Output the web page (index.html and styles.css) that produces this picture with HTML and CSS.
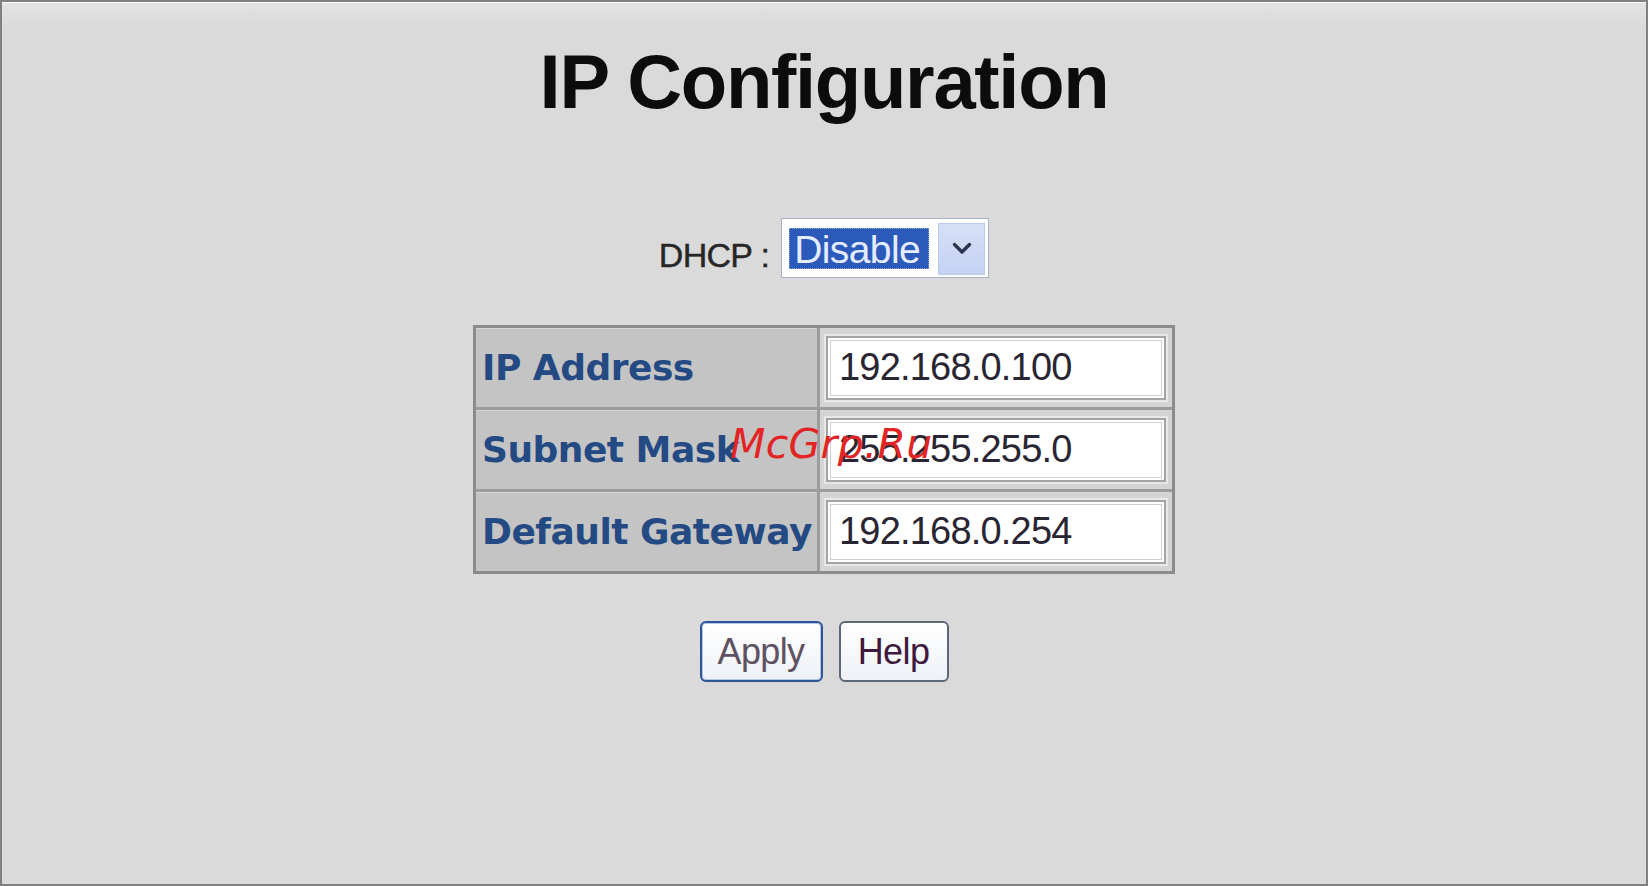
FILE: index.html
```html
<!DOCTYPE html>
<html lang="en">
<head>
<meta charset="utf-8">
<title>IP Configuration</title>
<link rel="stylesheet" href="styles.css">
</head>
<body>
<div class="frame">
  <h1 class="title">IP Configuration</h1>
  <div class="dhcp-row">
    <span class="dhcp-label">DHCP :</span>
    <div class="select">
      <span class="select-value">Disable</span>
      <span class="select-btn">
        <svg width="20" height="13" viewBox="0 0 20 13"><path d="M2.5 2.5 L10 10 L17.5 2.5" fill="none" stroke="#2b3550" stroke-width="3.4" stroke-linecap="round" stroke-linejoin="round"/></svg>
      </span>
    </div>
  </div>
  <div class="cfg-table">
    <div class="cell cell-label">IP Address</div>
    <div class="cell cell-value"><input class="field" type="text" value="192.168.0.100"></div>
    <div class="cell cell-label">Subnet Mask</div>
    <div class="cell cell-value"><input class="field" type="text" value="255.255.255.0"></div>
    <div class="cell cell-label">Default Gateway</div>
    <div class="cell cell-value"><input class="field" type="text" value="192.168.0.254"></div>
  </div>
  <div class="buttons">
    <button class="btn btn-apply" type="button">Apply</button>
    <button class="btn btn-help" type="button">Help</button>
  </div>
  <div class="watermark">McGrp.Ru</div>
</div>
</body>
</html>
```
FILE: styles.css
```css
html, body {
  margin: 0;
  padding: 0;
}
body {
  font-family: "Liberation Sans", Arial, sans-serif;
  background: #dadada;
}
.frame {
  position: relative;
  width: 1648px;
  height: 886px;
  box-sizing: border-box;
  border: 2px solid #808080;
  background: linear-gradient(#e3e3e3, #dadada 24px);
  box-shadow: inset 0 1px 0 #ffffff;
  display: flex;
  flex-direction: column;
  align-items: center;
  overflow: hidden;
}
.title {
  margin: 0;
  padding-top: 41px;
  font-size: 76px;
  line-height: 77px;
  font-weight: bold;
  letter-spacing: -1.3px;
  color: #0c0c0c;
}
.dhcp-row {
  margin-top: 98px;
  display: flex;
  align-items: center;
  gap: 12px;
  height: 60px;
}
.dhcp-label {
  font-size: 34px;
  letter-spacing: -0.7px;
  color: #262626;
  padding-top: 14px;
  -webkit-text-stroke: 0.4px #262626;
}
.select {
  width: 208px;
  height: 60px;
  box-sizing: border-box;
  border: 1px solid #a7b2c6;
  background: #ffffff;
  padding: 9px 3px 8px 7px;
  display: flex;
  align-items: center;
  gap: 9px;
}
.select-value {
  width: 140px;
  height: 41px;
  box-sizing: border-box;
  padding-top: 3px;
  padding-left: 5px;
  line-height: 38px;
  font-size: 39px;
  letter-spacing: -0.6px;
  background: #2c5aba;
  color: #e4ecff;
  outline: 1px dotted #8ea4d8;
  outline-offset: -1px;
  white-space: nowrap;
}
.select-btn {
  width: 47px;
  height: 52px;
  box-sizing: border-box;
  border: 1px solid #bccaea;
  background: linear-gradient(#d6e0f8, #c4d2f2);
  display: flex;
  align-items: center;
  justify-content: center;
}
.cfg-table {
  margin-top: 47px;
  display: grid;
  grid-template-columns: 341px 352px;
  grid-auto-rows: 79px;
  gap: 3px;
  border: 3px solid #8c8c8c;
  background: #9c9c9c;
}
.cell {
  display: flex;
  align-items: center;
  box-shadow: inset 0 1px 0 #d6d6d6;
}
.cell-label {
  background: #c4c4c4;
  padding-left: 6px;
  font-family: "DejaVu Sans", Verdana, sans-serif;
  font-weight: bold;
  font-size: 36px;
  letter-spacing: -0.5px;
  color: #244a84;
  white-space: nowrap;
}
.cell-value {
  background: #d4d4d4;
  justify-content: center;
}
.field {
  width: 340px;
  height: 64px;
  box-sizing: border-box;
  margin: 0;
  border: 2px solid #a4a4a4;
  box-shadow: 0 0 0 2px #e8e8e8, inset 0 0 0 2px #ffffff, inset 0 0 0 3px #d0d0d0;
  background: #ffffff;
  padding: 0 0 0 11px;
  font-family: "Liberation Sans", Arial, sans-serif;
  font-size: 38px;
  letter-spacing: -0.8px;
  color: #2a2532;
  outline: none;
}
.buttons {
  margin-top: 47px;
  display: flex;
  gap: 16px;
}
.btn {
  height: 61px;
  box-sizing: border-box;
  border-radius: 6px;
  font-family: "Liberation Sans", Arial, sans-serif;
  font-size: 36px;
  letter-spacing: -0.6px;
  padding: 0;
  background: linear-gradient(#ffffff, #eef1f7);
  cursor: pointer;
}
.btn-apply {
  width: 123px;
  border: 2px solid #2f5596;
  box-shadow: inset 0 0 0 1px #b4c6ea;
  color: #5e5262;
}
.btn-help {
  width: 110px;
  border: 2px solid #5c6878;
  color: #3e1a3e;
}
.watermark {
  position: absolute;
  left: 728px;
  top: 422px;
  font-family: "DejaVu Sans", sans-serif;
  font-style: italic;
  font-size: 41px;
  line-height: 41px;
  letter-spacing: 0.3px;
  color: #e32424;
  white-space: nowrap;
  pointer-events: none;
}
```
